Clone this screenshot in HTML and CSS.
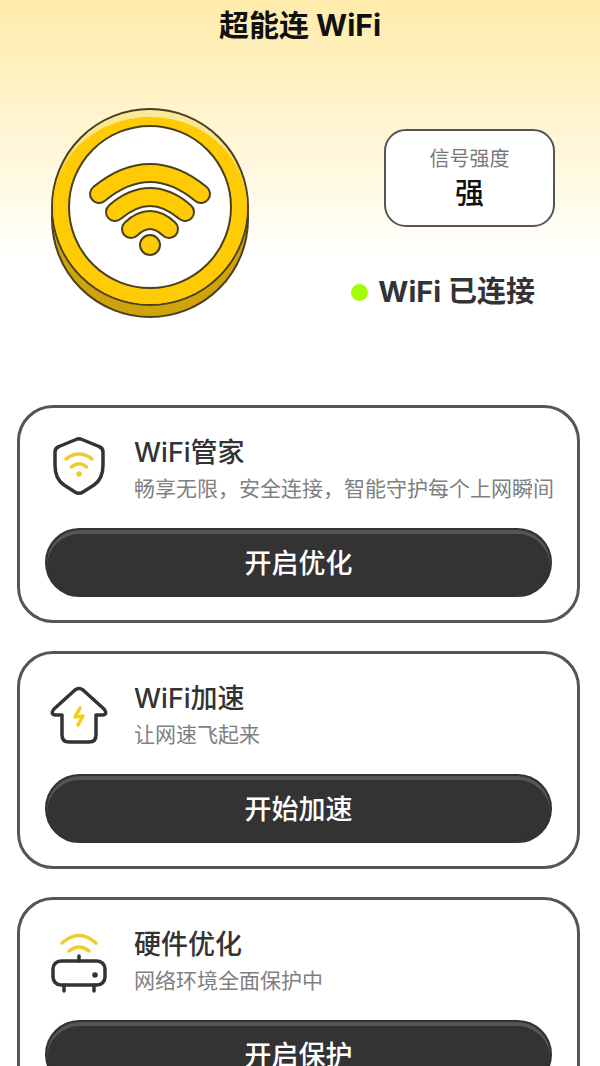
FILE: index.html
```
<!DOCTYPE html>
<html lang="zh-CN">
<head>
    <meta charset="UTF-8">
    <meta name="viewport" content="width=device-width, initial-scale=1.0">
    <title>超能连 WiFi</title>
    <link rel="stylesheet" href="styles.css">
</head>
<body>
    <header class="header">
        <h1>超能连 WiFi</h1>
    </header>

    <section class="hero">
        <svg class="coin" viewBox="0 0 200 212" aria-hidden="true">
            <defs>
                <linearGradient id="shine" x1="0" y1="0" x2="0" y2="1">
                    <stop offset="0" stop-color="#faeaa0"/>
                    <stop offset="0.3" stop-color="#f9de70"/>
                    <stop offset="0.5" stop-color="#ffcb05"/>
                </linearGradient>
            </defs>
            <circle cx="100" cy="112" r="98" fill="#cfa30b" stroke="#4a4020" stroke-width="2"/>
            <circle cx="100" cy="100" r="98" fill="url(#shine)" stroke="#4a4020" stroke-width="2"/>
            <path d="M3 100C3 49 47 10 100 10s97 39 97 90a97 97 0 0 1-194 0z" fill="#ffcb05"/>
            <circle cx="100" cy="100" r="81" fill="#fff" stroke="#4a4020" stroke-width="2"/>
            <!-- each wave is a dark line with a thinner yellow line on top -->
            <g fill="none" stroke-linecap="round">
                <g stroke="#4a4020" stroke-width="20">
                    <path d="M49 87Q100 45 151 87"/>
                    <path d="M65 105Q100 75 135 105"/>
                    <path d="M81 122Q100 104 119 122"/>
                </g>
                <g stroke="#ffcb05" stroke-width="16">
                    <path d="M49 87Q100 45 151 87"/>
                    <path d="M65 105Q100 75 135 105"/>
                    <path d="M81 122Q100 104 119 122"/>
                </g>
            </g>
            <circle cx="100" cy="138" r="10" fill="#ffcb05" stroke="#4a4020" stroke-width="2"/>
        </svg>

        <div class="info">
            <div class="signal">
                <span class="signal-label">信号强度</span>
                <span class="signal-value">强</span>
            </div>
            <p class="status"><span class="dot"></span>WiFi 已连接</p>
        </div>
    </section>

    <main class="cards">
        <section class="card">
            <div class="card-head">
                <svg class="icon" viewBox="0 4 60 60" fill="none" stroke-linecap="round" stroke-linejoin="round" aria-hidden="true">
                    <path d="M27 4.500Q30 3 33 4.500L50 11.500Q54 13 54 17V30Q54 44 45 50L34 57Q30 59.500 26 57L15 50Q6 44 6 30V17Q6 13 10 11.500Z" stroke="#333" stroke-width="3.500"/>
                    <path d="M17 24Q30 14 43 24M22.500 32Q30 25.500 37.500 32" stroke="#f0cb2e" stroke-width="3.500"/>
                    <circle cx="30" cy="39" r="2.800" fill="#f0cb2e"/>
                </svg>
                <div class="card-text">
                    <h2>WiFi管家</h2>
                    <p>畅享无限，安全连接，智能守护每个上网瞬间</p>
                </div>
            </div>
            <button type="button" class="btn">开启优化</button>
        </section>

        <section class="card">
            <div class="card-head">
                <svg class="icon" viewBox="0 0 60 60" fill="none" stroke-linecap="round" stroke-linejoin="round" aria-hidden="true">
                    <path d="M26 5Q30 2 34 5L55 24Q59 29 54 30H47V50Q47 57 40 57H20Q13 57 13 50V30H6Q1 29 5 24Z" stroke="#333" stroke-width="3.500"/>
                    <path d="M31 23L26 32L34 31L29 40" stroke="#f5cd12" stroke-width="3.500"/>
                </svg>
                <div class="card-text">
                    <h2>WiFi加速</h2>
                    <p>让网速飞起来</p>
                </div>
            </div>
            <button type="button" class="btn">开始加速</button>
        </section>

        <section class="card">
            <div class="card-head">
                <svg class="icon" viewBox="0 0 60 60" fill="none" stroke-linecap="round" aria-hidden="true">
                    <path d="M13 12Q30-3 47 12M20 20Q30 12 40 20" stroke="#f0cb2e" stroke-width="3.500"/>
                    <rect x="4" y="30" width="52" height="24" rx="8" stroke="#333" stroke-width="3.500"/>
                    <path d="M30 25V30M15 54V60M45 54V60" stroke="#333" stroke-width="3.500"/>
                    <circle cx="46" cy="44" r="2.800" fill="#333"/>
                </svg>
                <div class="card-text">
                    <h2>硬件优化</h2>
                    <p>网络环境全面保护中</p>
                </div>
            </div>
            <button type="button" class="btn">开启保护</button>
        </section>
    </main>
</body>
</html>
```
FILE: styles.css
```
* {
    box-sizing: border-box;
}
body {
    margin: 0;
    font-family: 'Inter', 'Noto Sans CJK SC', sans-serif;
    color: #333;
    background: #fff linear-gradient(#ffecab, #fff5cf 120px, #fff 260px) no-repeat;
    overflow-x: hidden;
}
h1, h2, p {
    margin: 0;
}
.header {
    padding: 3px 0 5px;
    text-align: center;
}
.header h1 {
    font-size: 30px;
    line-height: 44px;
    font-weight: 700;
    color: #111;
}

/* Coin and connection status */
.hero {
    display: flex;
    justify-content: space-between;
    align-items: flex-start;
    padding: 55px 45px 0 50px;
}
.coin {
    width: 200px;
    height: 212px;
}
.info {
    display: flex;
    flex-direction: column;
    align-items: flex-end;
    padding-top: 22px;
}
.signal {
    display: flex;
    flex-direction: column;
    align-items: center;
    width: 171px;
    padding: 13px 0 11px;
    background-color: #fff;
    border: 2px solid #555;
    border-radius: 22px;
}
.signal-label {
    font-size: 20px;
    line-height: 30px;
    color: #777;
}
.signal-value {
    font-size: 29px;
    line-height: 40px;
    font-weight: 500;
    color: #111;
}
.status {
    display: flex;
    align-items: center;
    gap: 10px;
    padding-right: 20px;
    margin-top: 44px;
    font-size: 29px;
    line-height: 42px;
    font-weight: 700;
}
.dot {
    width: 17px;
    height: 17px;
    border-radius: 50%;
    background-color: #a6fb0b;
}

/* Feature cards */
.cards {
    display: flex;
    flex-direction: column;
    gap: 28px;
    padding: 86px 20px 28px 17px;
}
.card {
    padding: 25px 25px 23px;
    background-color: #fff;
    border: 3px solid #555;
    border-radius: 36px;
}
.card-head {
    display: flex;
    align-items: center;
    gap: 25px;
    padding-left: 4px;
}
.icon {
    flex: none;
    width: 60px;
    height: 60px;
    overflow: visible;
}
.card-text {
    white-space: nowrap;
}
.card h2 {
    font-size: 27px;
    line-height: 40px;
    font-weight: 500;
}
.card p {
    font-size: 21px;
    line-height: 32px;
    color: #808080;
}
.btn {
    display: block;
    width: 100%;
    height: 69px;
    margin-top: 23px;
    padding: 0 0 2px;
    border: 2px solid #333;
    border-radius: 35px;
    background-color: #333;
    box-shadow: inset 0 4px 0 #555;
    color: #fff;
    font-family: inherit;
    font-size: 27px;
    font-weight: 500;
    cursor: pointer;
}
```
